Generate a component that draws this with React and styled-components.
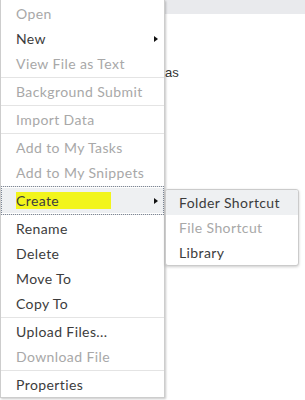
import React from 'react';
import styled, {createGlobalStyle} from 'styled-components';

const Global = createGlobalStyle`
    html, body {
        margin: 0;
        padding: 0;
        background: #ffffff;
    }
    body {
        font-family: Lato, "Open Sans", sans-serif;
    }
`;

// page behind the menu
const Page = styled.div`
    position: relative;
    width: 305px;
    height: 400px;
    overflow: hidden;
    background: #ffffff;
`;

const TopBar = styled.div`
    height: 14px;
    background: #e9eaed;
`;

const Content = styled.div`
    padding: 51px 0 0 165px;
    font-family: "Liberation Sans", Arial, sans-serif;
    font-size: 13px;
    color: #333333;
`;

const TreeLine = styled.div`
    width: 6px;
    height: 2px;
    margin: 177px 0 0 0;
    background: #9a9a9a;
`;

const Menu = styled.div`
    position: absolute;
    top: 0;
    left: 0;
    width: 163px;
    padding: 1px 0 0;
    background: #ffffff;
    border: 1px solid #cdcdcd;
    border-top: none;
    box-shadow: 1px 1px 2px rgba(0, 0, 0, 0.22);
`;

const Separator = styled.div`
    height: 1px;
    margin: 1px 0;
    background: #e4e4e4;
`;

const Row = styled.div`
    position: relative;
    display: flex;
    align-items: center;
    justify-content: space-between;
    height: 25px;
    padding: 0 6px 0 ${p => p.$indent || 15}px;
    font-size: 14px;
    letter-spacing: 0.4px;
    color: ${p => p.$disabled ? '#a8a8a8' : '#3c3c3c'};
    background: ${p => p.$active ? '#eef0f2' : 'transparent'};
    white-space: nowrap;

    ${p => p.$focused && `
        &::after{
            content: '';
            position: absolute;
            top: -2px;
            bottom: -2px;
            left: 0;
            right: 0;
            border: 1px dotted #7d8797;
            pointer-events: none;
        }
    `}
`;

const Marker = styled.span`
    display: inline-block;
    width: 95px;
    line-height: 17px;
    background: #f2f51c;
`;

const Arrow = styled.span`
    width: 0;
    height: 0;
    border-top: 3.5px solid transparent;
    border-bottom: 3.5px solid transparent;
    border-left: 4px solid #111111;
`;

const SubMenu = styled.div`
    position: absolute;
    top: 189px;
    left: 165px;
    width: 132px;
    background: #ffffff;
    border: 1px solid #cbcbcb;
    border-radius: 3px;
    box-shadow: 0 1px 3px rgba(0, 0, 0, 0.2);
    overflow: hidden;
`;

const groups = [
    [
        {label: 'Open', disabled: true},
        {label: 'New', arrow: true},
        {label: 'View File as Text', disabled: true},
    ],
    [{label: 'Background Submit', disabled: true}],
    [{label: 'Import Data', disabled: true}],
    [
        {label: 'Add to My Tasks', disabled: true},
        {label: 'Add to My Snippets', disabled: true},
    ],
    [{label: 'Create', arrow: true, active: true, marked: true}],
    [
        {label: 'Rename'},
        {label: 'Delete'},
        {label: 'Move To'},
        {label: 'Copy To'},
    ],
    [
        {label: 'Upload Files...'},
        {label: 'Download File', disabled: true},
    ],
    [{label: 'Properties'}],
];

const subItems = [
    {label: 'Folder Shortcut', active: true},
    {label: 'File Shortcut', disabled: true},
    {label: 'Library'},
];

const App = () => {
    return (
        <Page>
            <Global/>
            <TopBar/>
            <Content>
                as
                <TreeLine/>
            </Content>
            <Menu>
                {groups.map((group, gi) => (
                    <React.Fragment key={gi}>
                        {gi > 0 && <Separator/>}
                        {group.map(item => (
                            <Row
                                key={item.label}
                                $disabled={item.disabled}
                                $active={item.active}
                                $focused={item.active}
                            >
                                {item.marked ? <Marker>{item.label}</Marker> : <span>{item.label}</span>}
                                {item.arrow && <Arrow/>}
                            </Row>
                        ))}
                    </React.Fragment>
                ))}
            </Menu>
            <SubMenu>
                {subItems.map(item => (
                    <Row key={item.label} $indent={13} $disabled={item.disabled} $active={item.active}>
                        {item.label}
                    </Row>
                ))}
            </SubMenu>
        </Page>
    );
};

export default App;
